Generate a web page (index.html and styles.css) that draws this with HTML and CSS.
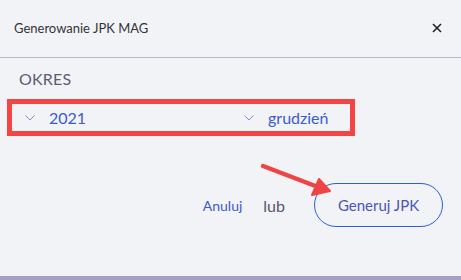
FILE: index.html
```html
<!DOCTYPE html>
<html lang="pl">
<head>
<meta charset="utf-8">
<title>Generowanie JPK MAG</title>
<link rel="stylesheet" href="styles.css">
</head>
<body>
<div class="dialog">
  <header class="header">
    <span class="title">Generowanie JPK MAG</span>
    <svg class="close" width="10" height="10" viewBox="0 0 10 10"><path d="M1 1L9 9M9 1L1 9" stroke="#222" stroke-width="1.6" fill="none"/></svg>
  </header>
  <section class="content">
    <div class="label">OKRES</div>
    <div class="selects">
      <div class="select">
        <svg class="chev" width="10" height="6" viewBox="0 0 10 6"><path d="M0.5 0.5L5 5L9.5 0.5" stroke="#7d8fc9" stroke-width="1" fill="none"/></svg>
        <span class="value">2021</span>
      </div>
      <div class="select select-last">
        <svg class="chev" width="10" height="6" viewBox="0 0 10 6"><path d="M0.5 0.5L5 5L9.5 0.5" stroke="#7d8fc9" stroke-width="1" fill="none"/></svg>
        <span class="value">grudzień</span>
      </div>
      <div class="highlight"></div>
    </div>
    <div class="actions">
      <a class="cancel">Anuluj</a>
      <span class="or">lub</span>
      <button class="generate">Generuj JPK</button>
      <svg class="arrow" width="80" height="40" viewBox="0 0 80 40">
        <path d="M3 3L58 24" stroke="#f04444" stroke-width="4.5" stroke-linecap="round" fill="none"/>
        <path d="M70 28L52 32L59 16Z" fill="#f04444" stroke="#f04444" stroke-width="2" stroke-linejoin="round"/>
      </svg>
    </div>
  </section>
  <div class="footer-bar"></div>
</div>
</body>
</html>
```
FILE: styles.css
```css
* { box-sizing: border-box; }
html, body {
  margin: 0;
  padding: 0;
  background: #f2f3f7;
}
body {
  font-family: "Source Sans Pro", Lato, "Noto Sans", sans-serif;
  width: 461px;
  height: 280px;
  overflow: hidden;
}
.dialog {
  height: 280px;
  display: flex;
  flex-direction: column;
}
.header {
  height: 58px;
  flex: none;
  display: flex;
  align-items: center;
  justify-content: space-between;
  padding: 0 19px 2px 14px;
  border-bottom: 1px solid #b3bacd;
}
.title {
  font-size: 13px;
  color: #333338;
}
.close { display: block; }
.content {
  flex: 1;
  padding: 11px 0 0 0;
}
.label {
  padding-left: 19px;
  font-size: 16px;
  line-height: 20px;
  color: #5c5c78;
  letter-spacing: 0.2px;
}
.selects {
  position: relative;
  margin: 15px 0 0 12px;
  width: 338px;
  height: 27px;
  display: flex;
  align-items: center;
}
.select {
  flex: none;
  width: 219px;
  padding-left: 13px;
  display: flex;
  align-items: center;
  gap: 14px;
}
.select-last { flex: 1; width: auto; }
.chev { display: block; margin-top: 1px; }
.value {
  font-size: 16px;
  color: #3a5ccc;
}
.highlight {
  position: absolute;
  left: -5px;
  top: -5px;
  right: -5px;
  bottom: -5px;
  border: 5px solid #f44444;
  pointer-events: none;
}
.actions {
  position: relative;
  margin-top: 52px;
  padding-right: 18px;
  display: flex;
  justify-content: flex-end;
  align-items: center;
}
.cancel {
  font-size: 14px;
  color: #3c5acb;
  cursor: pointer;
}
.or {
  margin-left: 21px;
  font-size: 16px;
  color: #55556a;
}
.generate {
  margin-left: 29px;
  width: 129px;
  height: 44px;
  border: 1px solid #2a62cf;
  border-radius: 22px;
  background: transparent;
  font-family: inherit;
  font-size: 15px;
  color: #4a55b8;
  cursor: pointer;
}
.arrow {
  position: absolute;
  left: 260px;
  top: -20px;
}
.footer-bar {
  height: 4px;
  flex: none;
  background: #a59fc3;
}
```
